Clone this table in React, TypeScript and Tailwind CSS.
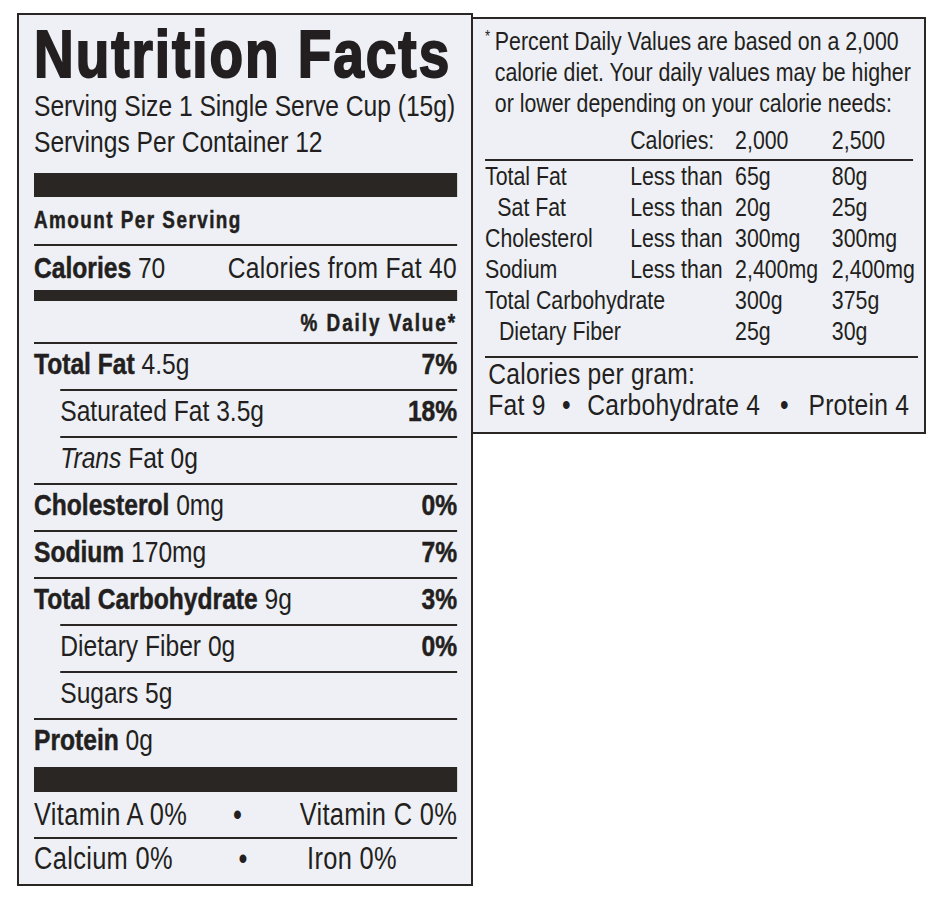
import React from 'react';

type Divider = 'full' | 'indent' | 'none';

// the label face is a condensed grotesque; Liberation Sans squeezed to 82% stands in for it
const condensed = 'origin-left scale-x-[0.82]';
const heavy = 'font-bold [-webkit-text-stroke:0.5px_#231f20]';

const nutrients: {
  label: string;
  amount: string;
  dv?: string;
  bold?: boolean;
  indent?: boolean;
  italic?: string;
  divider: Divider;
}[] = [
  { label: 'Total Fat', amount: '4.5g', dv: '7%', bold: true, divider: 'indent' },
  { label: 'Saturated Fat', amount: '3.5g', dv: '18%', indent: true, divider: 'indent' },
  { label: 'Fat', italic: 'Trans', amount: '0g', indent: true, divider: 'full' },
  { label: 'Cholesterol', amount: '0mg', dv: '0%', bold: true, divider: 'full' },
  { label: 'Sodium', amount: '170mg', dv: '7%', bold: true, divider: 'full' },
  { label: 'Total Carbohydrate', amount: '9g', dv: '3%', bold: true, divider: 'indent' },
  { label: 'Dietary Fiber', amount: '0g', dv: '0%', indent: true, divider: 'indent' },
  { label: 'Sugars', amount: '5g', indent: true, divider: 'full' },
];

const limits = [
  { label: 'Total Fat', less: true, a: '65g', b: '80g' },
  { label: 'Sat Fat', less: true, a: '20g', b: '25g', indent: 'pl-[15px]' },
  { label: 'Cholesterol', less: true, a: '300mg', b: '300mg' },
  { label: 'Sodium', less: true, a: '2,400mg', b: '2,400mg' },
  { label: 'Total Carbohydrate', less: false, a: '300g', b: '375g' },
  { label: 'Dietary Fiber', less: false, a: '25g', b: '30g', indent: 'pl-[17px]' },
];

function Line({ divider }: { divider: Divider }) {
  if (divider === 'none') return null;
  return <div className={`h-[2px] bg-[#2a2624] ${divider === 'indent' ? 'ml-[32px]' : ''}`} />;
}

function NutrientRow({ row }: { row: (typeof nutrients)[number] }) {
  return (
    <>
      <div className={`h-[45px] flex justify-between leading-[40px] text-[30px] ${row.indent ? 'pl-[32px]' : ''}`}>
        <div>
          {row.italic && <span className="italic">{row.italic} </span>}
          {row.bold ? <span className={heavy}>{row.label}</span> : <span>{row.label}</span>}{' '}
          <span>{row.amount}</span>
        </div>
        {row.dv && <div className={heavy}>{row.dv}</div>}
      </div>
      <Line divider={row.divider} />
    </>
  );
}

function FactsPanel() {
  return (
    <div className="w-[456px] h-[873px] shrink-0 border-2 border-[#2a2624] bg-[#eef0f5] pl-[15px] overflow-hidden">
      <div className={`w-[516px] ${condensed}`}>
        <h1 className="mt-[6px] h-[66px] leading-[66px] text-[67px] font-bold tracking-[2.4px] [-webkit-text-stroke:2px_#231f20] whitespace-nowrap">
          Nutrition Facts
        </h1>
        <div className="mt-[1px] text-[30px] leading-[36px] whitespace-nowrap">
          <div>Serving Size 1 Single Serve Cup (15g)</div>
          <div>Servings Per Container 12</div>
        </div>
        <div className="mt-[13px] h-[24px] bg-[#2a2624]" />
        <div className={`h-[47px] pt-[9px] leading-[28px] text-[23px] tracking-[1.8px] ${heavy}`}>Amount Per Serving</div>
        <Line divider="full" />
        <div className="h-[44px] flex justify-between leading-[44px] text-[30px] whitespace-nowrap">
          <div>
            <span className={heavy}>Calories</span> 70
          </div>
          <div className="tracking-[0.4px]">Calories from Fat 40</div>
        </div>
        <div className="h-[11px] bg-[#2a2624]" />
        <div className={`h-[41px] pt-[2px] leading-[40px] text-[23px] tracking-[2.4px] text-right ${heavy}`}>
          % Daily Value*
        </div>
        <Line divider="full" />
        {nutrients.map((n) => (
          <NutrientRow key={n.label + n.amount} row={n} />
        ))}
        <div className="h-[47px] leading-[40px] text-[30px]">
          <span className={heavy}>Protein</span> 0g
        </div>
        <div className="h-[25px] bg-[#2a2624]" />
        <div className="h-[45px] flex leading-[46px] text-[31px] tracking-[0.4px] whitespace-nowrap">
          <div className="w-[239px]">Vitamin A 0%</div>
          <div className="w-[32px] text-center">•</div>
          <div className="pl-[60px]">Vitamin C 0%</div>
        </div>
        <Line divider="full" />
        <div className="h-[45px] flex leading-[40px] text-[31px] tracking-[0.4px] whitespace-nowrap">
          <div className="w-[239px]">Calcium 0%</div>
          <div className="w-[32px] text-center">•</div>
          <div className="pl-[62px]">Iron 0%</div>
        </div>
      </div>
    </div>
  );
}

function FootnotePanel() {
  return (
    <div className="mt-[4px] w-[453px] h-[417px] shrink-0 border-t-2 border-r-2 border-b-2 border-[#2a2624] bg-[#eef0f5] pl-[12px] text-[26px] overflow-hidden">
      <div className={`w-[528px] ${condensed}`}>
        <div className="pt-[7px] leading-[31px] whitespace-nowrap">
          <div>
            <span className="inline-block w-[12px] text-[16px] align-top leading-[22px]">*</span>Percent Daily Values are based on a 2,000
          </div>
          <div className="pl-[12px]">calorie diet. Your daily values may be higher</div>
          <div className="pl-[12px]">or lower depending on your calorie needs:</div>
        </div>
        <div className="mt-[6px] grid grid-cols-[177px_128px_118px_auto] leading-[31px]">
          <div />
          <div>Calories:</div>
          <div>2,000</div>
          <div>2,500</div>
        </div>
        <div className="mt-[3px] mr-[6px] h-[2px] bg-[#2a2624]" />
        <div className="grid grid-cols-[177px_128px_118px_auto] leading-[31px] whitespace-nowrap">
          {limits.map((l) => (
            <React.Fragment key={l.label}>
              <div className={l.indent ?? ''}>{l.label}</div>
              <div>{l.less ? 'Less than' : ''}</div>
              <div>{l.a}</div>
              <div>{l.b}</div>
            </React.Fragment>
          ))}
        </div>
        <div className="mt-[9px] h-[2px] bg-[#2a2624]" />
        <div className="pl-[4px] text-[30px] leading-[31px] tracking-[0.3px] whitespace-nowrap">
          <div>Calories per gram:</div>
          <div className="flex">
            <span>Fat 9</span>
            <span className="mx-[20px]">•</span>
            <span>Carbohydrate 4</span>
            <span className="mx-[24px]">•</span>
            <span>Protein 4</span>
          </div>
        </div>
      </div>
    </div>
  );
}

export default function App() {
  return (
    <div className="w-[950px] h-[898px] bg-white text-[#231f20] [font-family:'Liberation_Sans',Arial,sans-serif] overflow-hidden">
      <div className="flex items-start pt-[13px] pl-[17px]">
        <FactsPanel />
        <FootnotePanel />
      </div>
    </div>
  );
}
